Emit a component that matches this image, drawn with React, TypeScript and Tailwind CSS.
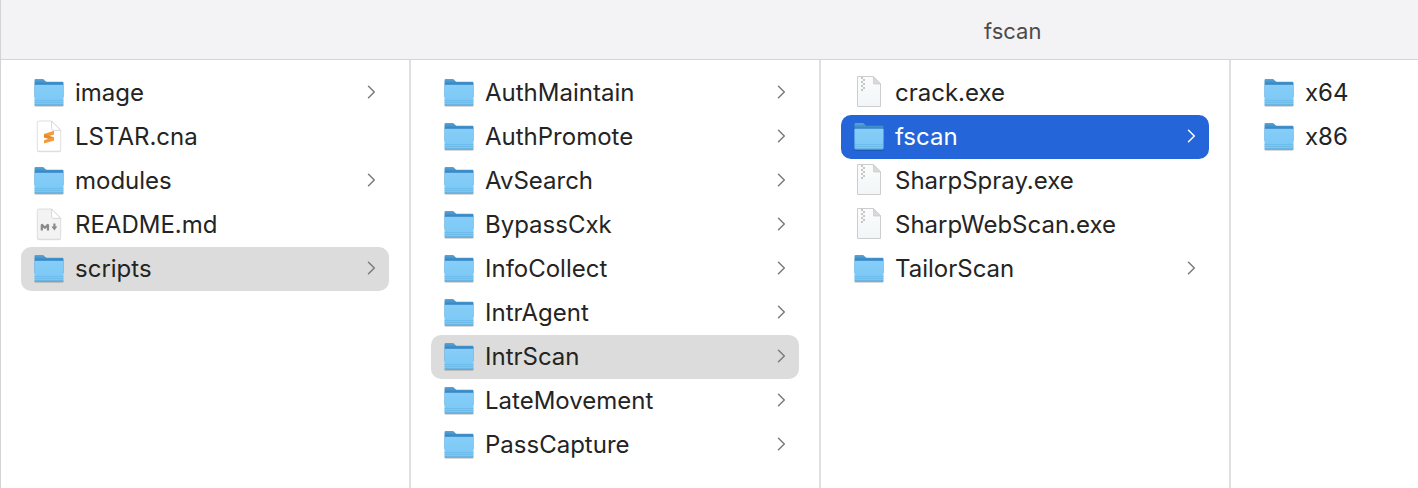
import { useState } from "react";

type Kind = "folder" | "sublime" | "markdown" | "archive";
type Entry = { name: string; kind: Kind };

const folder = (name: string): Entry => ({ name, kind: "folder" });

const columns: { label: string; entries: Entry[] }[] = [
  {
    label: "LSTAR",
    entries: [
      folder("image"),
      { name: "LSTAR.cna", kind: "sublime" },
      folder("modules"),
      { name: "README.md", kind: "markdown" },
      folder("scripts"),
    ],
  },
  {
    label: "scripts",
    entries: ["AuthMaintain", "AuthPromote", "AvSearch", "BypassCxk", "InfoCollect", "IntrAgent", "IntrScan", "LateMovement", "PassCapture"].map(folder),
  },
  {
    label: "IntrScan",
    entries: [
      { name: "crack.exe", kind: "archive" },
      folder("fscan"),
      { name: "SharpSpray.exe", kind: "archive" },
      { name: "SharpWebScan.exe", kind: "archive" },
      folder("TailorScan"),
    ],
  },
  { label: "fscan", entries: [folder("x64"), folder("x86")] },
];

function FolderIcon() {
  return (
    <svg viewBox="0 0 32 32" className="size-8 shrink-0 overflow-visible" aria-hidden="true">
      <defs>
        <linearGradient id="front" x1="0" y1="0" x2="0" y2="1">
          <stop offset="0" stopColor="#86cef9" />
          <stop offset="1" stopColor="#7ac6f4" />
        </linearGradient>
        <linearGradient id="back" x1="0" y1="0" x2="0" y2="1">
          <stop offset="0" stopColor="#5aa5d4" />
          <stop offset="0.3" stopColor="#3384c3" />
          <stop offset="1" stopColor="#3384c3" />
        </linearGradient>
      </defs>
      <rect x="1.2" y="26.5" width="29.6" height="3.2" rx="1.4" fill="#000" opacity="0.2" />
      <path d="M1.5 3.2Q1.5 2 2.7 2H9.4C11.6 2 12 4.8 14.2 4.8H29.3Q30.5 4.8 30.5 6V20H1.5Z" fill="url(#back)" />
      <path d="M1.5 8.6Q1.5 7.8 2.5 7.8H29.5Q30.5 7.8 30.5 8.6V27.4Q30.5 28.4 29.3 28.4H2.7Q1.5 28.4 1.5 27.4Z" fill="url(#front)" />
      <path d="M1.5 23.5H30.5M1.5 25.5H30.5" stroke="#5fb0e0" strokeWidth="0.5" />
      <path d="M2 28.1H30" stroke="#4c98c8" strokeWidth="0.9" />
    </svg>
  );
}

function FileIcon({ kind }: { kind: Kind }) {
  if (kind === "folder") return <FolderIcon />;
  if (kind === "archive") {
    return (
      <svg viewBox="0 0 32 32" className="size-8 shrink-0 overflow-visible" aria-hidden="true">
        <defs>
          <linearGradient id="paper" x1="0" y1="0" x2="0" y2="1">
            <stop offset="0" stopColor="#fbfcfc" />
            <stop offset="1" stopColor="#f2f6f8" />
          </linearGradient>
        </defs>
        <path d="M4.5 -0.5H20.5L27.5 7V29.5H4.5Z" fill="url(#paper)" stroke="#cdcdcd" strokeWidth="1" />
        <path d="M20.5 -0.5V7H27.5Z" fill="#d9d9d9" stroke="#cdcdcd" strokeWidth="0.8" />
        <path d="M8 0h2v2h-2zM10 2h2v2h-2zM8 4h2v2h-2zM10 6h2v2h-2zM8 8h2v2h-2zM10 10h2v2h-2zM8 12h2v2h-2z" fill="#c6c6c6" />
      </svg>
    );
  }
  return (
    <svg viewBox="0 0 32 32" className="size-8 shrink-0 overflow-visible" aria-hidden="true">
      <path d="M4 29.2H28V29.6Q28 31.2 26 31.2H6Q4 31.2 4 29.6Z" fill="#000" opacity="0.12" />
      <path d="M4.3 2Q4.3 0 6 0H18.6L27.7 9.4V28.6Q27.7 30.2 26 30.2H6Q4.3 30.2 4.3 28.6Z" fill={kind === "markdown" ? "#f3f3f3" : "#fff"} stroke="#d6d6d6" strokeWidth="0.8" />
      <path d="M18.6 0V7.4Q18.6 9.4 20.6 9.4H27.7Z" fill="#fff" stroke="#cfcfcf" strokeWidth="0.8" />
      {kind === "sublime" ? (
        <g>
          <path d="M11 16.8V13L21 9.8V13.4Z" fill="#f39b38" />
          <path d="M11 13.2L21 16.2V19.4L11 16.6Z" fill="#e8892a" />
          <path d="M11 22.6V19.2L21 16V19.4Z" fill="#f39b38" />
        </g>
      ) : (
        <g fill="none" stroke="#8a8a8a" strokeWidth="2.2">
          <path d="M8.8 21.5V15.6L11.9 19L15 15.6V21.5" strokeLinejoin="bevel" />
          <path d="M21.4 14.5V18.5" />
          <path d="M18.4 17.6H24.4L21.4 21.5Z" fill="#8a8a8a" stroke="none" />
        </g>
      )}
    </svg>
  );
}

export default function App() {
  const [selection, setSelection] = useState(["scripts", "IntrScan", "fscan", ""]);

  return (
    <main className="flex min-h-screen flex-col overflow-hidden border-l border-[#d4d4d4] bg-white font-[Inter,sans-serif] text-[#242424]">
      <header className="flex h-15 items-center border-b border-[#d5d5d6] bg-[#f3f3f5] pt-0.5 pl-[983px]">
        <h1 className="text-[22px] leading-7 text-[#4b4b4b]">fscan</h1>
      </header>
      <div className="flex grow">
        {columns.map((column, index) => (
          <nav key={column.label} aria-label={column.label} className="w-[410px] shrink-0 border-r-2 border-[#e0e0e0] px-5 pt-[11px]">
            <ul>
              {column.entries.map((entry) => {
                const selected = selection[index] === entry.name;
                const color = !selected ? "" : index === 2 ? "bg-[#2465d9] text-white" : "bg-[#dcdcdc]";
                return (
                  <li key={entry.name}>
                    <button
                      type="button"
                      aria-current={selected}
                      onClick={() => setSelection(selection.map((s, i) => (i === index ? entry.name : s)))}
                      className={`flex h-11 w-full items-center rounded-[10px] px-3 text-left ${color}`}
                    >
                      <FileIcon kind={entry.kind} />
                      <span className="ml-2.5 grow text-2xl">{entry.name}</span>
                      {entry.kind === "folder" && index < 3 && (
                        <svg viewBox="0 0 10 16" className={`mb-0.5 h-4 w-2.5 shrink-0 ${selected && index === 2 ? "text-white" : "text-[#7b7b7b]"}`} fill="none" stroke="currentColor" strokeWidth="1.5" strokeLinecap="round" strokeLinejoin="round" aria-hidden="true">
                          <path d="M1.5 2.2L7.3 8L1.5 13.8" />
                        </svg>
                      )}
                    </button>
                  </li>
                );
              })}
            </ul>
          </nav>
        ))}
      </div>
    </main>
  );
}
